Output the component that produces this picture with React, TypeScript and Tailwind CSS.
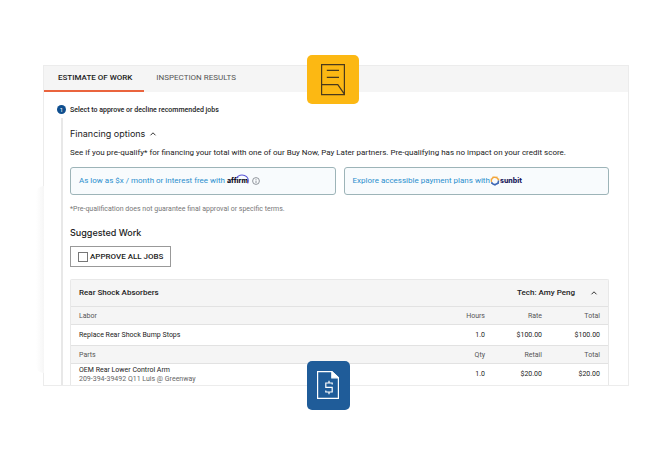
import React, { useState } from 'react';

type LineItem = {
  name: string;
  detail?: string;
  quantity: string;
  rate: string;
  total: string;
};

type LineGroup = {
  title: string;
  columns: string[];
  items: LineItem[];
};

const groups: LineGroup[] = [
  {
    title: 'Labor',
    columns: ['Hours', 'Rate', 'Total'],
    items: [{ name: 'Replace Rear Shock Bump Stops', quantity: '1.0', rate: '$100.00', total: '$100.00' }],
  },
  {
    title: 'Parts',
    columns: ['Qty', 'Retail', 'Total'],
    items: [
      {
        name: 'OEM Rear Lower Control Arm',
        detail: '209-394-39492 Q11 Luis @ Greenway',
        quantity: '1.0',
        rate: '$20.00',
        total: '$20.00',
      },
    ],
  },
];

const ChevronUp = () => (
  <svg className="w-2 h-2" viewBox="0 0 8 8" fill="none" stroke="#333" strokeWidth="1" aria-hidden="true">
    <path d="M1.5 5.3 4 2.8l2.5 2.5" />
  </svg>
);

const InfoIcon = () => (
  <svg className="w-2 h-2" viewBox="0 0 8 8" fill="none" stroke="#777c85" strokeWidth="0.8" aria-hidden="true">
    <circle cx="4" cy="4" r="3.4" />
    <path d="M4 3.6V6M4 2v.8" />
  </svg>
);

const AffirmLogo = () => (
  <span className="relative inline-block font-['Inter'] text-[7px] leading-3 font-extrabold text-[#101026]">
    affirm
    <svg className="absolute -right-px -top-px w-[14px] h-3" viewBox="0 0 14 12" fill="none" aria-hidden="true">
      <path d="M1.5 4.2C2.6 2 4.8 1 7 1c3.8 0 6.3 2.6 6.3 5.6 0 1-.2 2-.7 2.8" stroke="#5a55d6" strokeWidth="1.1" />
    </svg>
  </span>
);

const SunbitLogo = () => (
  <span className="inline-flex items-center font-['Inter'] text-[7px] leading-3 font-extrabold text-[#1c1b5e]">
    <svg className="w-[10px] h-[10px]" viewBox="0 0 10 10" fill="none" strokeWidth="1.4" aria-hidden="true">
      <path d="M1.6 6.2A3.6 3.6 0 1 1 8.5 4.5" stroke="#f3a63b" />
      <path d="M8.5 4.5A3.6 3.6 0 0 1 1.6 6.2" stroke="#3c66b4" />
      <path d="M.6 3.2l1 .4M3 .5l.5 1M7 .5l-.5 1M9.4 3.2l-1 .4" stroke="#f3a63b" strokeWidth="1" />
      <path d="M1 7.5l1-.5M5 9.8V9M9 7.5l-1-.5" stroke="#3c66b4" strokeWidth="1" />
    </svg>
    sunbit
  </span>
);

const NoteBadge = () => (
  <div className="absolute left-[45%] -top-[11px] w-[52px] h-[49px] rounded-[5px] bg-[#fcb813] flex items-center justify-center">
    <svg className="w-6 h-8" viewBox="0 0 24 32" fill="none" stroke="#4a3a1c" strokeWidth="1.2" aria-hidden="true">
      <path d="M.6.6h22.8v30H.6zM.6 20.6h16.2l6.6 9.6M5.8 6.4h12.2M5.8 13.4h12.2" />
    </svg>
  </div>
);

const InvoiceBadge = () => (
  <div className="absolute left-[45%] -bottom-[25px] w-[43px] h-[49px] rounded-[5px] bg-[#1f5c99] flex items-center justify-center">
    <svg className="w-[22px] h-7" viewBox="0 0 22 28" fill="none" stroke="#fff" strokeWidth="1.2" aria-hidden="true">
      <path d="M.6.6h14.2l6.6 6.2v20.6H.6z" />
      <path d="M14.8.6v6.2h6.6z" fill="#fff" />
      <path d="M15.2 13.6V12H8.8v4.4h6.4v4.6H8.8v-1.6M12 9.8V12M12 21v2.2" />
    </svg>
  </div>
);

const WorkTable = () => (
  <table className="w-full table-fixed border-collapse text-[7px]">
    <colgroup>
      <col />
      <col className="w-[57px]" />
      <col className="w-[57px]" />
      <col className="w-[66px]" />
    </colgroup>
    {groups.map((group) => (
      <tbody key={group.title}>
        <tr className="h-[18px] bg-[#f5f5f5] border-y border-[#e2e2e2] text-[#555]">
          <th scope="col" className="pl-2 text-left font-normal">{group.title}</th>
          <th scope="col" className="text-right font-normal">{group.columns[0]}</th>
          <th scope="col" className="text-right font-normal">{group.columns[1]}</th>
          <th scope="col" className="pr-2 text-right font-normal">{group.columns[2]}</th>
        </tr>
        {group.items.map((item) => (
          <tr key={item.name} className="h-[21px] text-[#222]">
            <td className="pl-2 pt-px leading-[9px]">
              <div>{item.name}</div>
              {item.detail && <div className="text-[#666]">{item.detail}</div>}
            </td>
            <td className="text-right">{item.quantity}</td>
            <td className="text-right">{item.rate}</td>
            <td className="pr-2 text-right">{item.total}</td>
          </tr>
        ))}
      </tbody>
    ))}
  </table>
);

export default function App() {
  const [approveAll, setApproveAll] = useState(false);

  return (
    <main className="bg-white pt-[65px] pb-[73px] pl-[43px] pr-[38px] font-['Roboto',sans-serif] text-[8px] leading-3 text-[#222]">
      <div className="relative border border-[#ececec] bg-white">
        {/* Soft shadow beside the card */}
        <div className="absolute -left-2 top-[120px] bottom-3 w-2 bg-linear-to-r from-white to-[#f6f6f6] rounded-l-full" />

        {/* Tabs */}
        <nav className="flex h-[26px] bg-[#f5f5f5]">
          <button className="pl-[14px] pr-3 border-b-2 border-[#ea643e] font-medium text-[#222]">ESTIMATE OF WORK</button>
          <button className="px-3 border-b-2 border-transparent text-[#555]">INSPECTION RESULTS</button>
        </nav>

        <div className="flex gap-1 pl-[13px] pr-[19px] pt-3">
          {/* Step marker */}
          <div className="flex flex-col items-center w-[9px] shrink-0 pt-[1px]">
            <span className="w-[9px] h-[9px] rounded-full bg-[#0f4f8f] text-white text-[6px] leading-[9px] text-center">1</span>
            <div className="mt-1 w-[2px] flex-1 bg-[#e8e8e8]" />
          </div>

          <div className="flex-1 min-w-0">
            <p className="text-[7px] font-medium">Select to approve or decline recommended jobs</p>

            <section className="pt-3">
              <h2 className="font-['Inter',sans-serif] text-[9px]">
                <button className="flex items-center gap-1">
                  Financing options
                  <ChevronUp />
                </button>
              </h2>
              <p className="pt-[7px]">
                See if you pre-qualify* for financing your total with one of our Buy Now, Pay Later partners. Pre-qualifying has no impact on your credit score.
              </p>
              <div className="grid grid-cols-2 gap-2 pt-2">
                <a href="#affirm" className="flex items-center gap-1 h-7 px-2 rounded-[3px] border border-[#9db4b8] bg-[#f8fbfd] text-[#2b8fce]">
                  <span>As low as $x / month or interest free with <AffirmLogo /></span>
                  <InfoIcon />
                </a>
                <a href="#sunbit" className="flex items-center h-7 px-2 rounded-[3px] border border-[#9db4b8] bg-[#f8fbfd] text-[#2b8fce]">
                  Explore accessible payment plans with
                  <SunbitLogo />
                </a>
              </div>
              <p className="pt-2 text-[7px] text-[#777]">
                *Pre-qualification does not guarantee final approval or specific terms.
              </p>
            </section>

            <section className="pt-3">
              <h2 className="font-['Inter',sans-serif] text-[9px] font-medium">Suggested Work</h2>
              <label className="mt-[7px] flex items-center gap-[2px] w-[101px] h-[21px] pl-[7px] border border-[#999] font-medium whitespace-nowrap">
                <input
                  type="checkbox"
                  checked={approveAll}
                  onChange={(e) => setApproveAll(e.target.checked)}
                  className="appearance-none shrink-0 w-[10px] h-[10px] border border-[#777] bg-white checked:bg-[#1f5c99]"
                />
                APPROVE ALL JOBS
              </label>
            </section>

            <section className="mt-3 border border-b-0 border-[#e8e8e8] rounded-t-[2px]">
              <div className="flex items-center h-[26px] px-2 bg-[#f5f5f5] font-medium">
                <h3 className="flex-1">Rear Shock Absorbers</h3>
                <span>Tech: Amy Peng</span>
                <button className="ml-[15px] mr-[2px]" aria-label="Collapse job">
                  <ChevronUp />
                </button>
              </div>
              <WorkTable />
            </section>
          </div>
        </div>

        <NoteBadge />
        <InvoiceBadge />
      </div>
    </main>
  );
}
